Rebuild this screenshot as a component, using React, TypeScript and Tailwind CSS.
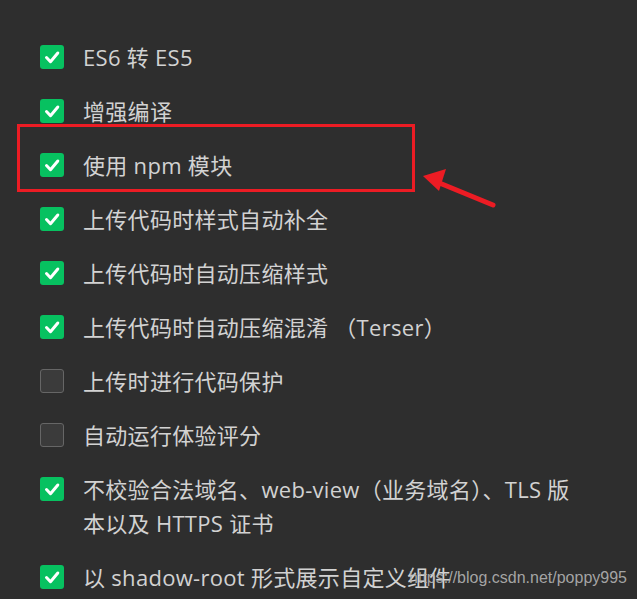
import React from 'react';

interface Option {
  label: string[];
  checked: boolean;
}

const options: Option[] = [
  { label: ['ES6 转 ES5'], checked: true },
  { label: ['增强编译'], checked: true },
  { label: ['使用 npm 模块'], checked: true },
  { label: ['上传代码时样式自动补全'], checked: true },
  { label: ['上传代码时自动压缩样式'], checked: true },
  { label: ['上传代码时自动压缩混淆 （Terser）'], checked: true },
  { label: ['上传时进行代码保护'], checked: false },
  { label: ['自动运行体验评分'], checked: false },
  { label: ['不校验合法域名、web-view（业务域名）、TLS 版', '本以及 HTTPS 证书'], checked: true },
  { label: ['以 shadow-root 形式展示自定义组件'], checked: true },
];

const CheckBox: React.FC<{ checked: boolean }> = ({ checked }) =>
  checked ? (
    <span className="mt-[5px] flex h-6 w-6 shrink-0 items-center justify-center rounded-[3px] bg-[#07c160]">
      <svg width="24" height="24" viewBox="0 0 24 24" fill="none">
        <path d="M6.5 12.5l4 4.2L17.8 8" stroke="#fff" strokeWidth="3" strokeLinecap="round" strokeLinejoin="round" />
      </svg>
    </span>
  ) : (
    <span className="mt-[5px] block h-6 w-6 shrink-0 rounded-[3px] border border-[#666] bg-[#3b3b3b]" />
  );

export default function App() {
  return (
    <div
      className="relative h-[599px] w-[637px] overflow-hidden bg-[#2e2e2e] pt-[30px]"
      style={{ fontFamily: '"Open Sans", "Noto Sans CJK SC", sans-serif' }}
    >
      <ul className="flex flex-col">
        {options.map((opt, i) => (
          <li key={i} className="flex items-start gap-[19px] py-[10px] pl-[40px]">
            <CheckBox checked={opt.checked} />
            <div className="text-[22px] leading-[34px] tracking-[0.3px] text-[#d2d2d2]">
              {opt.label.map((line, j) => (
                <div key={j}>{line}</div>
              ))}
            </div>
          </li>
        ))}
      </ul>

      {/* annotation: red frame + arrow */}
      <div className="absolute left-[17px] top-[124px] h-[68px] w-[398px] border-[3px] border-[#ec1c24]" />
      <svg className="absolute left-[415px] top-[165px]" width="90" height="50" viewBox="0 0 90 50">
        <line x1="78" y1="40" x2="22" y2="17" stroke="#ec1c24" strokeWidth="5" strokeLinecap="round" />
        <polygon points="8,11 31,4 24,26" fill="#ec1c24" />
      </svg>

      <div
        className="absolute right-[10px] top-[564px] text-[16px] leading-[28px] text-[#b4b4b4]/90"
        style={{ fontFamily: '"Liberation Sans", Arial, sans-serif' }}
      >
        https://blog.csdn.net/poppy995
      </div>
    </div>
  );
}
